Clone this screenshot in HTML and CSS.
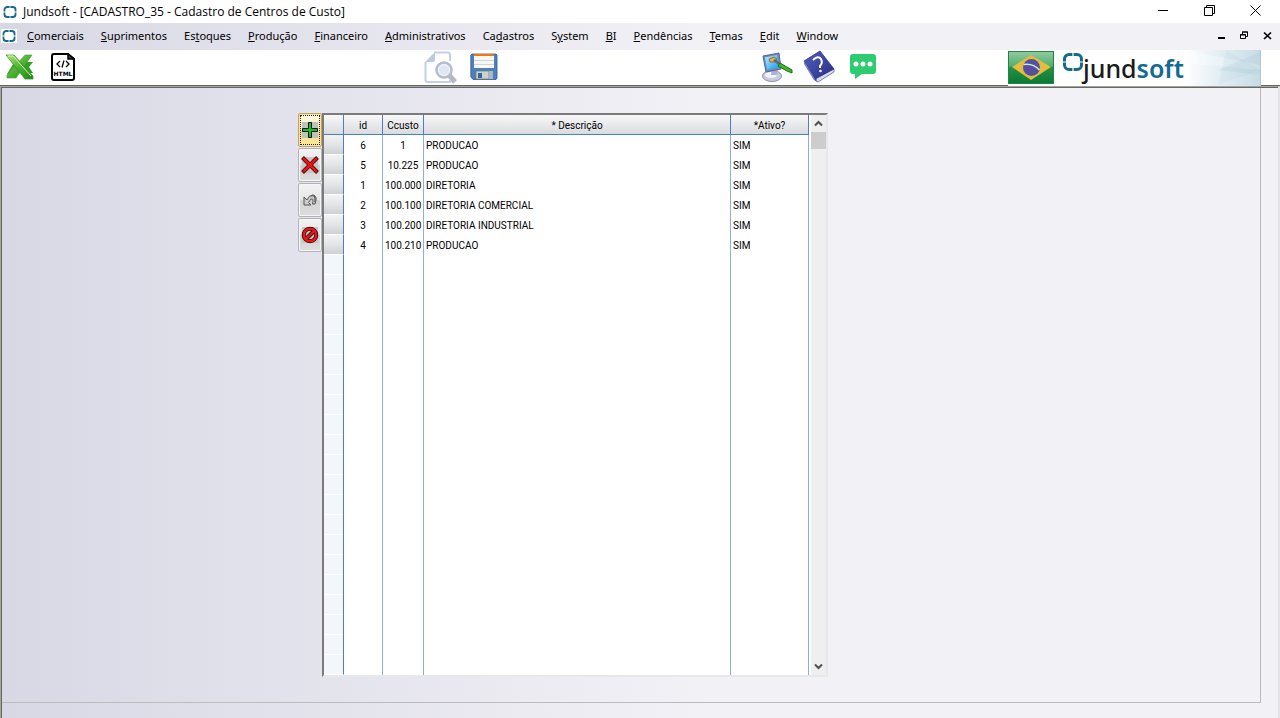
FILE: index.html
```html
<!DOCTYPE html>
<html lang="pt-BR">
<head>
<meta charset="utf-8">
<title>Jundsoft - [CADASTRO_35 - Cadastro de Centros de Custo]</title>
<link rel="stylesheet" href="styles.css">
</head>
<body>
<svg class="defs" width="0" height="0" aria-hidden="true">
  <defs>
    <linearGradient id="xl" x1="0" y1="0" x2="1" y2="1"><stop offset="0" stop-color="#b5ea7c"/><stop offset=".45" stop-color="#55b53a"/><stop offset="1" stop-color="#1d8a14"/></linearGradient>
    <linearGradient id="flag" x1="0" y1="0" x2="0" y2="1"><stop offset="0" stop-color="#8fca9f"/><stop offset=".45" stop-color="#55ae70"/><stop offset=".5" stop-color="#279048"/><stop offset="1" stop-color="#087b35"/></linearGradient>
    <linearGradient id="book" x1="0" y1="0" x2="1" y2="1"><stop offset="0" stop-color="#5060bd"/><stop offset="1" stop-color="#282c86"/></linearGradient>
    <linearGradient id="screen" x1="0" y1="0" x2="1" y2="1"><stop offset="0" stop-color="#c0efff"/><stop offset="1" stop-color="#1296ee"/></linearGradient>
    <symbol id="mark" viewBox="0 0 20 18">
      <path d="M9.400 1.500H6A4.500 4.500 0 0 0 1.500 6V8.400M10.600 1.500H14A4.500 4.500 0 0 1 18.500 6V8.400M9.400 16.500H6A4.500 4.500 0 0 1 1.500 12V9.600M10.600 16.500H14A4.500 4.500 0 0 0 18.500 12V9.600" fill="none" stroke="#166a8e" stroke-width="3"/>
    </symbol>
  </defs>
</svg>

<header class="titlebar">
  <svg class="app-icon" viewBox="0 0 20 18"><use href="#mark"/></svg>
  <h1 class="title">Jundsoft - [CADASTRO_35 - Cadastro de Centros de Custo]</h1>
  <div class="window-controls">
    <button class="win-btn" aria-label="Minimizar"><svg width="11" height="11"><path d="M0 5.500H10" stroke="#000"/></svg></button>
    <button class="win-btn" aria-label="Restaurar"><svg width="11" height="11"><path d="M.5 2.500H8.500V10.500H.5ZM2.500 2.500V.5H10.500V8.500H8.500" fill="none" stroke="#000"/></svg></button>
    <button class="win-btn" aria-label="Fechar"><svg width="11" height="11"><path d="M.5 .5L10.500 10.500M10.500 .5L.5 10.500" stroke="#000"/></svg></button>
  </div>
</header>

<nav class="menubar">
  <span class="child-icon"><svg class="app-icon" viewBox="0 0 20 18"><use href="#mark"/></svg></span>
  <button class="menu"><u>C</u>omerciais</button>
  <button class="menu"><u>S</u>uprimentos</button>
  <button class="menu">Es<u>t</u>oques</button>
  <button class="menu"><u>P</u>rodução</button>
  <button class="menu"><u>F</u>inanceiro</button>
  <button class="menu"><u>A</u>dministrativos</button>
  <button class="menu">Ca<u>d</u>astros</button>
  <button class="menu">S<u>y</u>stem</button>
  <button class="menu"><u>B</u>I</button>
  <button class="menu"><u>P</u>endências</button>
  <button class="menu"><u>T</u>emas</button>
  <button class="menu"><u>E</u>dit</button>
  <button class="menu"><u>W</u>indow</button>
  <div class="child-controls">
    <button class="child-btn" aria-label="Minimizar janela"><svg width="9" height="9"><path d="M1 7H8" stroke="#000" stroke-width="2"/></svg></button>
    <button class="child-btn" aria-label="Restaurar janela"><svg width="9" height="9"><path d="M.5 3.500H5.500V7.500H.5ZM0 4H6M2.500 3V1H7.500V5.500H6M2 1H8" fill="none" stroke="#000"/></svg></button>
    <button class="child-btn" aria-label="Fechar janela"><svg width="9" height="9"><path d="M1 1.500L8 8M8 1.500L1 8" stroke="#000" stroke-width="1.700"/></svg></button>
  </div>
</nav>

<div class="toolbar" role="toolbar">
  <div class="group export">
    <button class="tool" aria-label="Excel"><svg width="30" height="28" viewBox="0 0 30 28">
      <path d="M19 9H28L24 14L28 20H19Z" fill="#359d29"/><path d="M2 21H9L13 13L8 11Z" fill="#3fa82d"/>
      <path d="M20 2H27L11 25H2V22Z" fill="url(#xl)" stroke="#43a02e" stroke-width=".6"/>
      <path d="M1 2H9L28 23V26H20Z" fill="url(#xl)" stroke="#2c8c20" stroke-width=".7"/>
      <path d="M3 3H8L26 23" fill="none" stroke="#d2f5a9" stroke-width="1"/></svg></button>
    <button class="tool" aria-label="HTML"><svg width="24" height="28" viewBox="0 0 24 28">
      <path d="M3 1H17L23 6V25Q23 27 21 27H3Q1 27 1 25V3Q1 1 3 1Z" fill="#fff" stroke="#000" stroke-width="2"/><path d="M17 1V6H23Z" fill="#444" stroke="#000" stroke-width="1.500"/>
      <path d="M9 8L6 11L9 14M15 8L18 11L15 14M13 7.500L11 14.500" fill="none" stroke="#000" stroke-width="1.300"/>
      <text class="html-label" x="12" y="23" text-anchor="middle">HTML</text></svg></button>
  </div>
  <div class="group">
    <button class="tool" aria-label="Visualizar"><svg width="34" height="33" viewBox="0 0 34 33">
      <path d="M10 1.500H24Q26 1.500 26 4V10M26 29V31H4Q1.500 31 1.500 29V11" fill="none" stroke="#c3d0e6" stroke-width="2"/><path d="M1 11L11 1V9Q11 11 9 11Z" fill="#bccbe2"/>
      <path d="M25 24L31 31" stroke="#b4b9c0" stroke-width="5"/><circle cx="20" cy="19" r="7.500" fill="#dfe7f5" stroke="#b7bec7" stroke-width="2.500"/><circle cx="20" cy="19" r="5.500" fill="none" stroke="#f5f8fd"/></svg></button>
    <button class="tool save" aria-label="Salvar"><svg width="28" height="28" viewBox="0 0 28 28">
      <path d="M2 1H26L27 2V25L26 26.500H3L.8 24V2Z" fill="#4c80bd" stroke="#335d91" stroke-width=".8"/><path d="M4 1H24V15H4Z" fill="#f7f7f7"/><path d="M4 1H24V3H4Z" fill="#f07812"/><path d="M4 7.500H24M4 11.500H24" stroke="#d3d3d3"/>
      <path d="M6 18H19V26H6Z" fill="#d0d1ca" stroke="#687780" stroke-width=".7"/><path d="M8 20H12V25H8Z" fill="#36679b"/><path d="M19 18H23V26H19Z" fill="#a9b8c8"/></svg></button>
  </div>
  <div class="group help">
    <button class="tool" aria-label="Temas"><svg width="32" height="32" viewBox="0 0 32 32">
      <ellipse cx="11" cy="25" rx="9.500" ry="5.500" fill="#c8cce0" stroke="#8c90ad"/><ellipse cx="10" cy="24" rx="6" ry="3" fill="#f3f3fc"/><path d="M11 17H17L16 24H10Z" fill="#aab2d1"/>
      <path d="M2 5L18 2L20 18L5 21Z" fill="#6b8fc5" stroke="#536795"/><path d="M4 6.500L16 4L18 16L6 18.500Z" fill="url(#screen)"/>
      <path d="M8 8L13 6L16 8L14 11L9 11Z" fill="#e4ad4c" stroke="#80551b" stroke-width=".7"/><path d="M13 9L20 14" stroke="#5d6676" stroke-width="2.500"/><path d="M19 12L31 19V22L26 20L17 15Z" fill="#42b729" stroke="#17701a"/></svg></button>
    <button class="tool" aria-label="Ajuda"><svg width="32" height="34" viewBox="0 0 32 34">
      <path d="M14 23L29 17L31 19V22L15 32Q12 32 12 28Z" fill="#d9dcef" stroke="#62669c" stroke-width=".8"/><path d="M1 11L17 1L31 19L16 27Q12 28 13 31Z" fill="url(#book)" stroke="#30367e" stroke-width=".8"/><path d="M1 11L13 31Q10 30 9 27L1 14Z" fill="#7783c7"/>
      <path d="M10 10Q15 5 18 9Q20 13 17 16V18" fill="none" stroke="#fff" stroke-width="2"/><circle cx="17.500" cy="21" r="1.300" fill="#fff"/></svg></button>
    <button class="tool" aria-label="Mensagens"><svg width="26" height="26" viewBox="0 0 26 26">
      <path d="M3 0H23Q26 0 26 3V17Q26 20 23 20H12L5 25V20H3Q0 20 0 17V3Q0 0 3 0Z" fill="#2ecc71"/><g fill="#fff"><circle cx="6" cy="10" r="2.500"/><circle cx="13" cy="10" r="2.500"/><circle cx="20" cy="10" r="2.500"/></g></svg></button>
  </div>
  <div class="group brand">
    <button class="tool" aria-label="Português"><svg width="46" height="33" viewBox="0 0 46 33">
      <path d="M0 0H46V33H0Z" fill="#258242"/><path d="M1 1H45V32H1Z" fill="url(#flag)"/><path d="M4 16L23 4L43 16L23 29Z" fill="#e3bd3b"/><circle cx="23.500" cy="16.500" r="8.500" fill="#5450a0"/><path d="M15.500 13.500Q25 12 31.500 19" fill="none" stroke="#d6e2e6" stroke-width="1.700"/></svg></button>
    <div class="logo"><svg class="logo-mark" viewBox="0 0 20 18"><use href="#mark"/></svg><span class="logo-text">jund<b>soft</b></span></div>
    <svg class="facets" viewBox="0 0 76 35" preserveAspectRatio="none" aria-hidden="true"><path d="M0 0L76 15V20L10 14Z" fill="#fff" opacity=".3"/><path d="M42 0L34 35L76 20Z" fill="#a8c8d8" opacity=".15"/><path d="M76 2L34 20L76 25Z" fill="#8eb9ca" opacity=".15"/></svg>
  </div>
</div>

<main class="workspace">
  <section class="form">
    <div class="row-actions">
      <button class="action focused" aria-label="Inserir"><svg width="18" height="18"><path d="M1 1H17V17H1Z" fill="#c1c1c1"/><path d="M7.500 1.500H10.500V7.500H16.500V10.500H10.500V16.500H7.500V10.500H1.500V7.500H7.500Z" fill="#10c418" stroke="#111"/></svg></button>
      <button class="action" aria-label="Excluir"><svg width="18" height="18"><path d="M1 1H17V17H1Z" fill="#c6c6c6"/><path d="M1.500 1.500L16.500 16.500M16.500 1.500L1.500 16.500" stroke="#111" stroke-width="4"/><path d="M2 2L16 16M16 2L2 16" stroke="#fa0c0c" stroke-width="2.600"/></svg></button>
      <button class="action" aria-label="Desfazer"><svg width="18" height="18"><path d="M3 6V14H10L7.500 11.500L10 8Q13 7 11.500 13L14 13Q17 5 12 4Q8 4 6 9Z" fill="#ccc" stroke="#555"/><path d="M10 5Q15 3 14 11" fill="none" stroke="#666" stroke-width="1.500"/></svg></button>
      <button class="action" aria-label="Cancelar"><svg width="18" height="18"><path d="M1 1H17V17H1Z" fill="#c6c6c6"/><g fill="none"><circle cx="9" cy="9" r="6.300" stroke="#111" stroke-width="4"/><path d="M5 13L13 5" stroke="#111" stroke-width="4"/><circle cx="9" cy="9" r="6.300" stroke="#fa1010" stroke-width="2.400"/><path d="M5 13L13 5" stroke="#fa1010" stroke-width="2.400"/></g></svg></button>
    </div>
    <div class="grid-box">
      <table class="grid">
        <colgroup><col class="c-sel"><col class="c-id"><col class="c-code"><col><col class="c-active"></colgroup>
        <thead><tr><th></th><th>id</th><th>Ccusto</th><th>* Descrição</th><th>*Ativo?</th></tr></thead>
        <tbody>
          <tr><td></td><td>6</td><td>1</td><td>PRODUCAO</td><td>SIM</td></tr>
          <tr><td></td><td>5</td><td>10.225</td><td>PRODUCAO</td><td>SIM</td></tr>
          <tr><td></td><td>1</td><td>100.000</td><td>DIRETORIA</td><td>SIM</td></tr>
          <tr><td></td><td>2</td><td>100.100</td><td>DIRETORIA COMERCIAL</td><td>SIM</td></tr>
          <tr><td></td><td>3</td><td>100.200</td><td>DIRETORIA INDUSTRIAL</td><td>SIM</td></tr>
          <tr><td></td><td>4</td><td>100.210</td><td>PRODUCAO</td><td>SIM</td></tr>
          <tr class="filler"><td></td><td></td><td></td><td></td><td></td></tr>
        </tbody>
      </table>
      <div class="scrollbar">
        <button class="scroll-btn" aria-label="Rolar para cima"><svg width="9" height="7"><path d="M1 5.500L4.500 2L8 5.500" fill="none" stroke="#505050" stroke-width="2"/></svg></button>
        <div class="thumb"></div>
        <button class="scroll-btn" aria-label="Rolar para baixo"><svg width="9" height="7"><path d="M1 1.500L4.500 5L8 1.500" fill="none" stroke="#505050" stroke-width="2"/></svg></button>
      </div>
    </div>
  </section>
</main>
</body>
</html>
```
FILE: styles.css
```css
* { box-sizing: border-box; }
html, body { height: 100%; }
body {
  margin: 0;
  display: flex;
  flex-direction: column;
  overflow: hidden;
  background: #fff;
  color: #000;
  font: 11px/16px "Noto Sans", "Open Sans", sans-serif;
}
button { margin: 0; padding: 0; border: 0; background: none; color: inherit; font: inherit; }
svg { display: block; flex: none; }
.defs { position: absolute; }

.titlebar { display: flex; align-items: center; height: 23px; flex: none; padding-left: 3px; }
.app-icon { width: 14px; height: 12px; }
.title { margin: 0 0 0 6px; font: 12px/16px "Open Sans", sans-serif; white-space: nowrap; }
.window-controls { display: flex; margin-left: auto; padding: 0 2px 2px 0; }
.win-btn { display: flex; align-items: center; justify-content: center; width: 46px; height: 20px; }

.menubar {
  display: flex;
  align-items: center;
  gap: 1px;
  height: 27px;
  flex: none;
  padding: 0 0 2px 1px;
  background: linear-gradient(to right, #d8d8e5, #f2f1f6 55%);
}
.child-icon { display: flex; align-items: center; justify-content: center; width: 16px; height: 14px; margin-right: 1px; background: #fff; }
.menu { padding: 0 8px; white-space: nowrap; }
.menu u { text-underline-offset: 1px; }
.child-controls { display: flex; margin-left: auto; padding-right: 1px; }
.child-btn { display: flex; align-items: center; justify-content: center; width: 23px; height: 20px; }

.toolbar {
  display: grid;
  grid-template-columns: 424fr 337fr 247fr 272fr;
  height: 36px;
  flex: none;
  border-bottom: 1px solid #646762;
}
.group { display: flex; align-items: center; min-width: 0; padding-bottom: 2px; }
.export { padding-left: 5px; gap: 16px; }
.save { margin-left: 12px; }
.help { gap: 10px; }
.help > :last-child { margin-left: 5px; }
.html-label { font: bold 6px "DejaVu Sans", sans-serif; }
.brand {
  margin-right: 19px;
  padding-bottom: 1px;
  border-right: 1px solid #b9c5cc;
  background: linear-gradient(to right, #fff 70%, #e6f0f5 82%, #c8dce6);
}
.logo { display: flex; align-items: flex-start; height: 30px; margin-left: 9px; }
.logo-mark { width: 20px; height: 18px; }
.logo-text { color: #1b1b1b; font: 500 25px/30px "Noto Sans", sans-serif; }
.logo-text b { color: #136b91; font-weight: 600; }
.facets { flex: 1; min-width: 0; height: 35px; }

.workspace {
  flex: 1;
  min-height: 0;
  display: flex;
  border: 1px solid #a3a4a2;
  border-right: 2px solid #e3e3e6;
  border-bottom: 0;
  padding: 1px 17px 15px 1px;
  background: linear-gradient(to right, #d8d8e5, #f2f1f6 55%);
  box-shadow: inset 1px 1px 0 #666864;
}
.form {
  flex: 1;
  min-width: 0;
  display: flex;
  align-items: stretch;
  border-right: 1px solid #bcbcbe;
  border-bottom: 1px solid #bcbcbe;
  padding: 25px 0 25px 296px;
}
.row-actions { display: flex; flex-direction: column; gap: 1px; width: 24px; }
.action {
  display: flex;
  align-items: center;
  justify-content: center;
  height: 34px;
  border: 1px solid #b4b4b8;
  border-radius: 2px;
  background: linear-gradient(#f3f3f3, #e5e5e5 50%, #d2d2d2 52%, #dedede);
  box-shadow: inset 0 0 0 1px #f5f5f5;
}
.focused {
  border-color: #c6a45e;
  background: linear-gradient(#fffbe9, #fceeb5 45%, #f9dd83 55%, #fbe8a4);
  box-shadow: inset 0 0 0 1px #fbe39c;
  outline: 1px dotted #222;
  outline-offset: -3px;
}
.grid-box {
  display: flex;
  width: 506px;
  border: 2px solid;
  border-color: #7b7b7b #e8e8ea #e8e8ea #7b7b7b;
  background: #fff;
}
.grid {
  width: 485px;
  height: 100%;
  table-layout: fixed;
  border-collapse: separate;
  border-spacing: 0;
  font: 10px/14px Roboto, "Liberation Sans", sans-serif;
}
.c-sel { width: 20px; }
.c-id { width: 39px; }
.c-code { width: 41px; }
.c-active { width: 78px; }
.grid th, .grid td { height: 20px; padding: 2px 2px 0; border-right: 1px solid #8faed4; white-space: nowrap; }
.grid th { border-right-color: #4a80bf; border-bottom: 1px solid #4a80bf; background: linear-gradient(#f8f8f8, #e9eaec 50%, #d9dbdf); font-weight: normal; }
.grid td:nth-child(2), .grid td:nth-child(3) { text-align: center; }
.grid td:first-child { border-right-color: #4a80bf; border-bottom: 1px solid #fff; background: linear-gradient(#f3f3f4, #e2e3e6 55%, #ced0d5); }
.grid .filler td { height: auto; }
.grid .filler td:first-child { background: repeating-linear-gradient(#f3f7fc 0, #f3f7fc 19px, #fff 19px, #fff 20px); }
.scrollbar { display: flex; flex-direction: column; width: 15px; margin-left: auto; background: #efefef; }
.scroll-btn { display: flex; align-items: center; justify-content: center; height: 17px; }
.thumb { height: 17px; margin-bottom: auto; background: #cdcdcd; }
```
